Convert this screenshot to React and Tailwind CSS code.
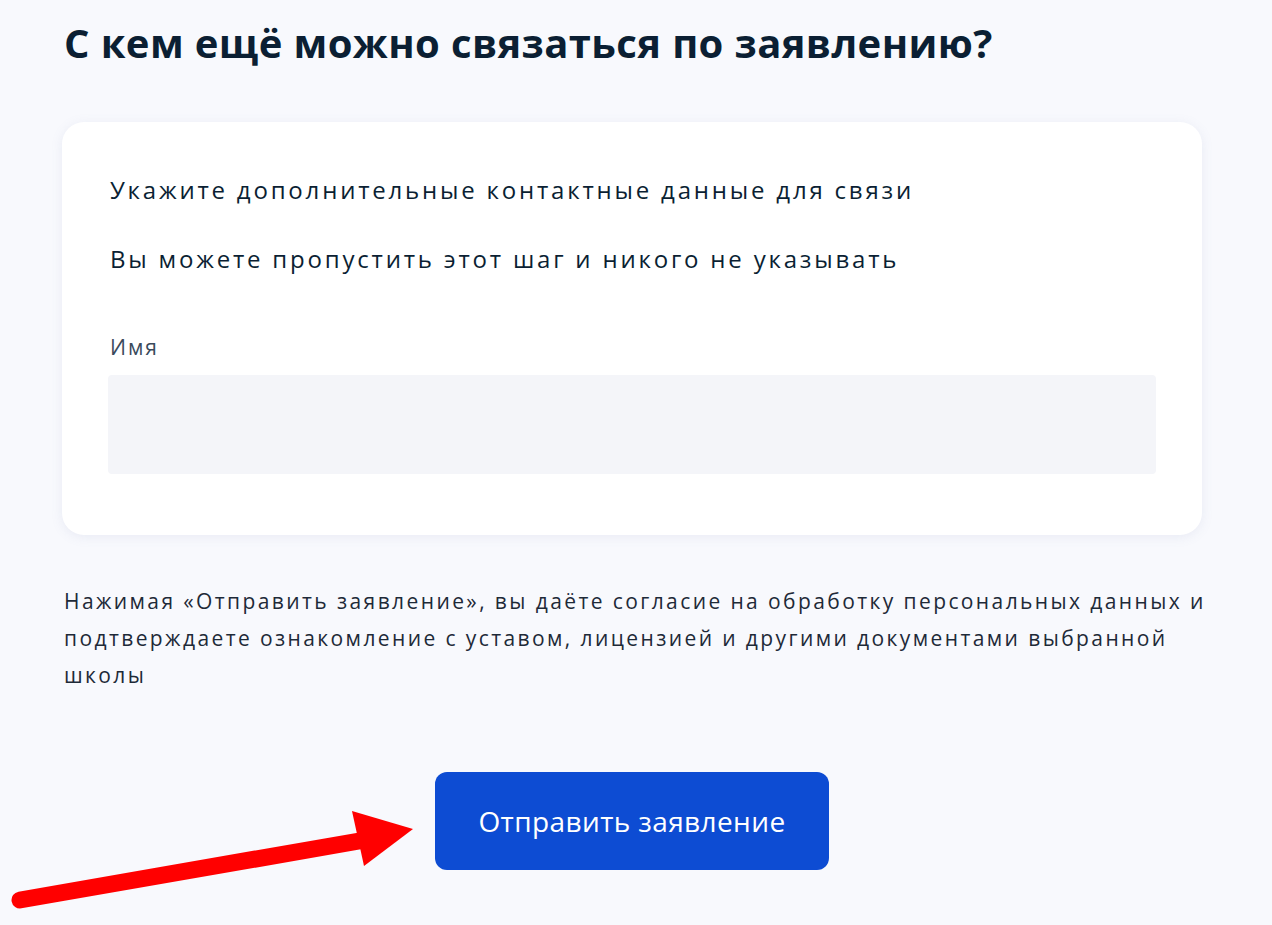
export default function App() {
  return (
    <div className="relative min-h-[925px] bg-[#f8f9fd] font-['Open_Sans','Lato',sans-serif] text-[#0b1f33] overflow-hidden">
      <div className="pl-[64px] pr-[50px] pt-[14px]">
        <h1 className="text-[40px] leading-[58px] font-bold tracking-[0.4px]">
          С кем ещё можно связаться по заявлению?
        </h1>

        <div className="mt-[50px] w-[1140px] -ml-[2px] bg-white rounded-[22px] shadow-[0_2px_12px_rgba(120,135,180,0.12)] px-[46px] pt-[48px] pb-[61px]">
          <p className="text-[24px] leading-[40px] px-[2px] tracking-[2.8px]">Укажите дополнительные контактные данные для связи</p>
          <p className="mt-[29px] text-[24px] leading-[40px] px-[2px] tracking-[2.8px]">Вы можете пропустить этот шаг и никого не указывать</p>
          <label className="block mt-[54px] text-[21px] leading-[28px] text-[#3a4a5c] px-[2px] tracking-[2px]">Имя</label>
          <div className="mt-[14px] h-[99px] bg-[#f4f5f9] rounded-[4px]" />
        </div>

        <p className="mt-[48px] text-[21px] leading-[37px] text-[#1e2a38] max-w-[1156px] tracking-[2.4px]">
          Нажимая «Отправить заявление», вы даёте согласие на обработку персональных данных и подтверждаете ознакомление с уставом, лицензией и другими документами выбранной школы
        </p>

        <div className="mt-[78px] flex pl-[371px]">
          <button className="w-[394px] h-[98px] rounded-[12px] bg-[#0d4cd3] text-white text-[28px] tracking-[0.4px]">
            Отправить заявление
          </button>
        </div>
      </div>

      <svg className="absolute left-0 top-[800px]" width="440" height="120" viewBox="0 800 440 120">
        <line x1="20" y1="900" x2="365" y2="840" stroke="#ff0000" strokeWidth="17" strokeLinecap="round" />
        <polygon points="352,811 413,829 364,866" fill="#ff0000" />
      </svg>
    </div>
  )
}
